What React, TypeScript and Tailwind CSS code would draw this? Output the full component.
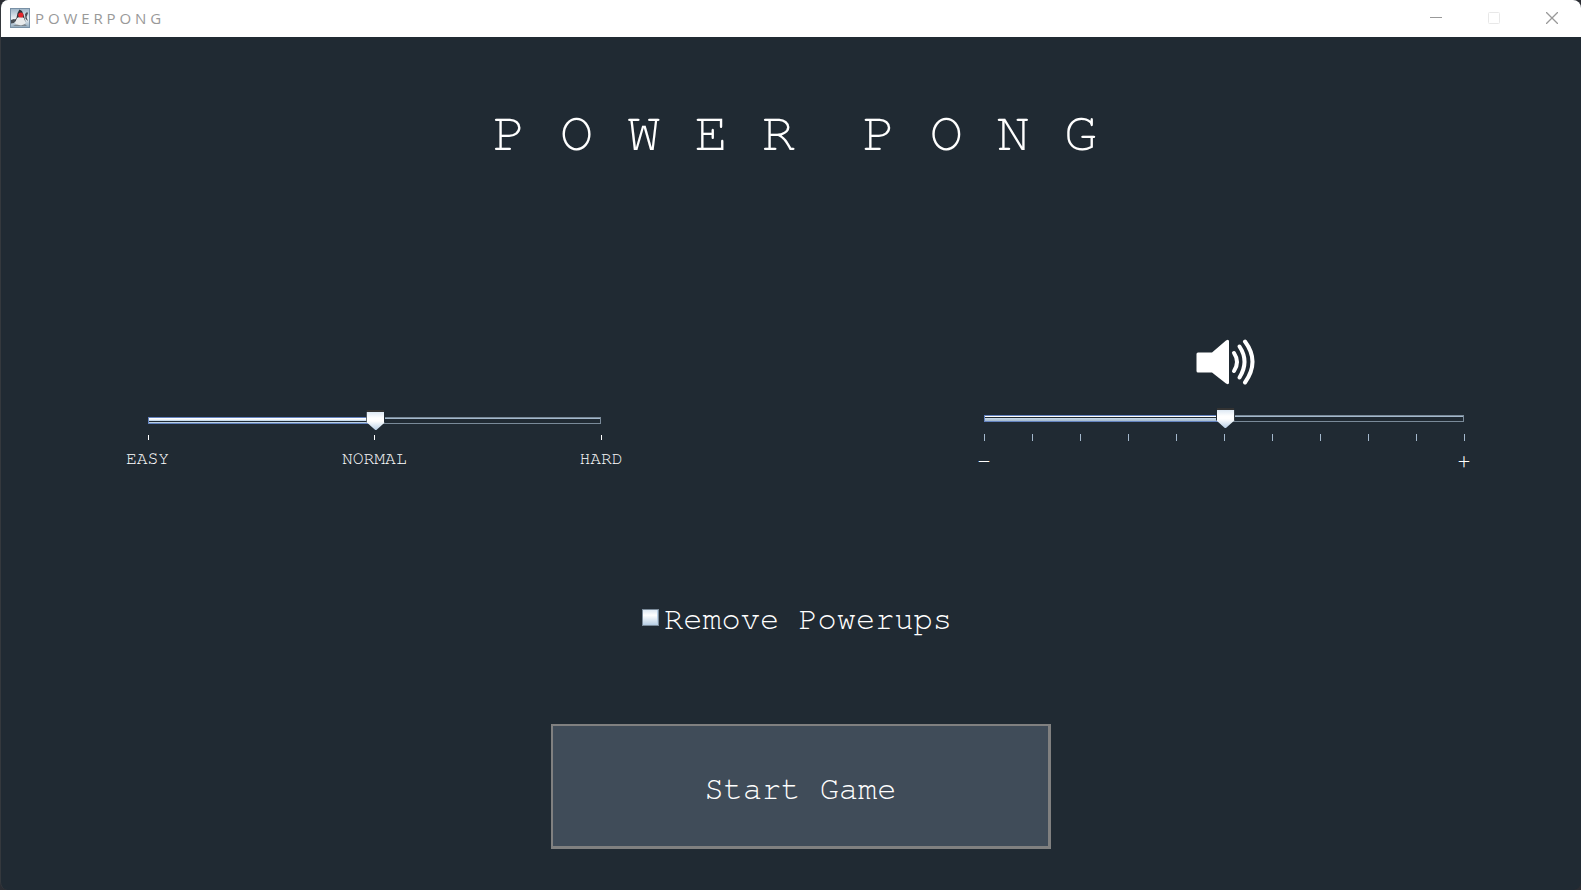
import { useState, type CSSProperties } from "react";

const MONO = "font-['FreeMono','Nimbus_Mono_PS','Liberation_Mono',monospace]";

type RangeProps = {
  label: string;
  max: number;
  initial: number;
  fillClass: string;
};

function Range({ label, max, initial, fillClass }: RangeProps) {
  const [value, setValue] = useState(initial);
  const fill: CSSProperties = { width: `${(value / max) * 100}%` };
  return (
    <div className="relative h-5">
      <div className="absolute inset-x-0 top-[7px] h-[7px] border border-[#7a8a99] bg-[linear-gradient(to_bottom,#a3b8cc_1px,transparent_1px)]" />
      <div className={`absolute left-0 top-[7px] h-[7px] border border-[#6382bf] ${fillClass}`} style={fill} />
      <input
        type="range"
        aria-label={label}
        min={0}
        max={max}
        value={value}
        onChange={(e) => setValue(Number(e.target.value))}
        className="absolute -left-2 top-0 h-5 w-[calc(100%+19px)] cursor-pointer appearance-none bg-transparent outline-none [&::-webkit-slider-thumb]:h-5 [&::-webkit-slider-thumb]:w-[19px] [&::-webkit-slider-thumb]:appearance-none [&::-webkit-slider-thumb]:bg-[linear-gradient(to_right,#202a33_1px,transparent_1px,transparent_18px,#202a33_18px),linear-gradient(to_bottom,#333333_2px,#dde8f3_2px,#ffffff_8px,#ffffff_11px,#b8cfe5_20px)] [&::-webkit-slider-thumb]:[clip-path:polygon(0_0,100%_0,100%_60%,53%_100%,47%_100%,0_60%)]"
      />
    </div>
  );
}

function Ticks({ count, className }: { count: number; className: string }) {
  return (
    <div className="-mr-px flex justify-between">
      {Array.from({ length: count }, (_, i) => (
        <span key={i} className={`w-px ${className}`} />
      ))}
    </div>
  );
}

function JavaIcon() {
  return (
    <svg viewBox="0 0 20 20" className="size-5" aria-hidden="true">
      <defs>
        <linearGradient id="sky" x1="0" y1="0" x2="0" y2="1">
          <stop offset="0" stopColor="#9db4c6" />
          <stop offset="0.55" stopColor="#edf2f5" />
          <stop offset="1" stopColor="#8fa8bc" />
        </linearGradient>
      </defs>
      <rect x="0.5" y="0.5" width="19" height="19" fill="url(#sky)" stroke="#7890a5" />
      <path d="M9.500 1.500 7.500 5 6.500 10l-3 3.500h12L14 8l-2-5z" fill="#30343a" />
      <path d="M7 10c2-1.500 5-1.500 7 0l1.500 4.500L14 17.500H6.500L5 14.500z" fill="#e9ebec" />
      <path d="m1 12 3-1 2 1-2 3-3 .5zm14-6 2-2 1 1-1.500 4 1.500 4-2.500-2z" fill="#4a4f56" />
      <circle cx="10.800" cy="7" r="2.600" fill="#e5262b" />
      <path d="M3 18q3-2.500 6-1l2 .5 4-1.500 2 2z" fill="#7d868d" />
    </svg>
  );
}

function SpeakerIcon() {
  return (
    <svg viewBox="0 0 60 46" className="h-[46px] w-[60px]" fill="none" aria-hidden="true">
      <path d="M2 13.500h14L30 1.500q3-2 3 1v41q0 3-3 1L16 33.500H2q-1.500 0-1.500-1.500V15q0-1.500 1.500-1.500z" fill="#fff" />
      <g stroke="#fff" strokeWidth="4" strokeLinecap="round">
        <path d="M38 14q6 9 0 18" />
        <path d="M43.500 7.500q10 15 0 31" />
        <path d="M49 2.500q15 20 0 41" />
      </g>
    </svg>
  );
}

export default function App() {
  return (
    <div className="min-h-screen bg-[#2b2d33]">
      <div className="flex min-h-screen flex-col overflow-hidden rounded-lg border-l border-[#34383d] bg-[#202a33]">
        <header className="flex h-[37px] items-center bg-white pb-px pl-[9px]">
          <JavaIcon />
          <span className="ml-[5px] font-['Open_Sans',sans-serif] text-[15px] leading-5 text-[#999999]">P O W E R P O N G</span>
          <div className="ml-auto flex h-full text-[#999999]">
            <button aria-label="Minimize" className="grid w-[58px] place-items-center">
              <svg viewBox="0 0 12 12" className="size-3" stroke="currentColor"><path d="M0 5.500h12" /></svg>
            </button>
            <button aria-label="Maximize" disabled className="grid w-[58px] place-items-center text-[#e8e8e8]">
              <svg viewBox="0 0 12 12" className="size-3" fill="none" stroke="currentColor"><rect x="0.5" y="0.5" width="11" height="11" rx="1" /></svg>
            </button>
            <button aria-label="Close" className="grid w-[58px] place-items-center">
              <svg viewBox="0 0 12 12" className="size-3" stroke="currentColor" strokeWidth="1.300"><path d="m0 0 12 12M12 0 0 12" /></svg>
            </button>
          </div>
        </header>

        <main className={`flex flex-1 flex-col items-center text-white ${MONO}`}>
          <h1 className="mt-16 whitespace-pre pl-2 text-[56px] leading-[64px]">P O W E R  P O N G</h1>

          <div className="mt-[174px] flex w-full items-end justify-between pl-[9.300%] pr-[7.400%]">
            <section aria-label="Difficulty" className="w-[34.400%] pb-1">
              <Range label="Difficulty" max={2} initial={1} fillClass="bg-[linear-gradient(to_bottom,#ffffff_1px,#dbe6f2_2px,#b8cfe5_3px,#202a33_3px,#202a33_4px,#b8cfe5_4px)]" />
              <div className="mt-[5px]">
                <Ticks count={3} className="h-[5px] bg-white" />
              </div>
              <div className="-mx-[22px] mt-[9px] grid grid-cols-3 text-lg leading-5">
                <span>EASY</span>
                <span className="text-center">NORMAL</span>
                <span className="text-right">HARD</span>
              </div>
            </section>

            <section aria-label="Volume" className="w-[36.500%]">
              <div className="mb-[23px] flex justify-center pl-1">
                <SpeakerIcon />
              </div>
              <Range label="Volume" max={10} initial={5} fillClass="bg-[linear-gradient(to_bottom,#ffffff_1px,#202a33_1px,#202a33_2px,#c8daeb_2px,#a3b8cc_5px)]" />
              <div className="mt-[6px]">
                <Ticks count={11} className="h-[7px] bg-[#a3b8cc]" />
              </div>
              <div className="-mx-[7px] mt-2 flex justify-between text-2xl leading-6">
                <span>–</span>
                <span>+</span>
              </div>
            </section>
          </div>

          <label className="ml-3 mt-[126px] flex cursor-pointer items-center gap-[5px] text-[32px] leading-10">
            <input
              type="checkbox"
              className="mb-[3px] size-[17px] appearance-none border border-[#7a8a99] bg-[linear-gradient(to_bottom,#dde8f3,#ffffff_35%,#b8cfe5)] shadow-[inset_-1px_-1px_#b8cfe5] checked:bg-none checked:bg-[#6382bf]"
            />
            Remove Powerups
          </label>

          <button className="ml-5 mt-[85px] h-[125px] w-[500px] border-2 border-b-[3px] border-r-[3px] border-[#808080] bg-[#404c59] pt-[6px] text-[32px] leading-10">
            Start Game
          </button>
        </main>
      </div>
    </div>
  );
}
